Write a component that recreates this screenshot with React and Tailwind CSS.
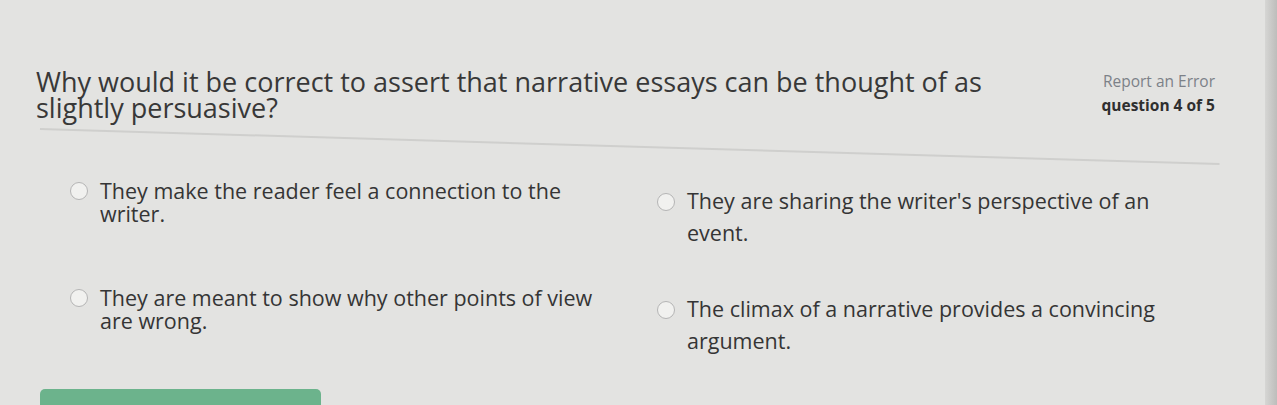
import React from 'react';

const left = [
  'They make the reader feel a connection to the writer.',
  'They are meant to show why other points of view are wrong.',
];
const right = [
  "They are sharing the writer's perspective of an event.",
  'The climax of a narrative provides a convincing argument.',
];

function Radio() {
  return <span className="mt-[3px] h-[18px] w-[18px] shrink-0 rounded-full border-[1.5px] border-[#b5b5b5] bg-[#f1f1ef]" />;
}

function Option({ text, leading }) {
  return (
    <label className="flex items-start gap-[12px]">
      <Radio />
      <span className={`w-[520px] text-[21.5px] text-[#353535] ${leading}`}>{text}</span>
    </label>
  );
}

export default function App() {
  return (
    <div className="relative flex h-[405px] w-[1277px] overflow-hidden bg-[#e3e3e1] font-['Open_Sans',sans-serif]">
      <div className="flex min-w-0 flex-1 flex-col pl-[36px] pr-[50px] pt-[69px]">
        {/* En-tête de la question */}
        <div className="flex items-start justify-between">
          <h1 className="w-[1010px] text-[27px] leading-[26px] text-[#383838]">
            Why would it be correct to assert that narrative essays can be thought of as slightly persuasive?
          </h1>
          <div className="flex flex-col items-end text-[15.5px] leading-[24px]">
            <a className="text-[#7c8188]">Report an Error</a>
            <span className="font-bold text-[#2f2f2f]">question 4 of 5</span>
          </div>
        </div>

        <div className="ml-[4px] mt-[7px] h-[2px] w-[1180px] origin-left rotate-[1.7deg] bg-[#cfcfcd]" />

        {/* Réponses */}
        <div className="ml-[34px] mt-[49px] flex gap-[37px]">
          <div className="flex flex-col gap-[61px]">
            {left.map((t) => (
              <Option key={t} text={t} leading="leading-[23px]" />
            ))}
          </div>
          <div className="mt-[11px] flex flex-col gap-[49px]">
            {right.map((t) => (
              <Option key={t} text={t} leading="leading-[32px] -mt-[5px]" />
            ))}
          </div>
        </div>

        <div className="ml-[4px] mt-auto h-[20px] w-[281px] translate-y-[4px] self-start rounded-t-[5px] bg-[#6cb38c]" />
      </div>
      <div className="w-[12px] shrink-0 bg-gradient-to-l from-[#bdbdbb] to-[#d6d6d4]" />
    </div>
  );
}
